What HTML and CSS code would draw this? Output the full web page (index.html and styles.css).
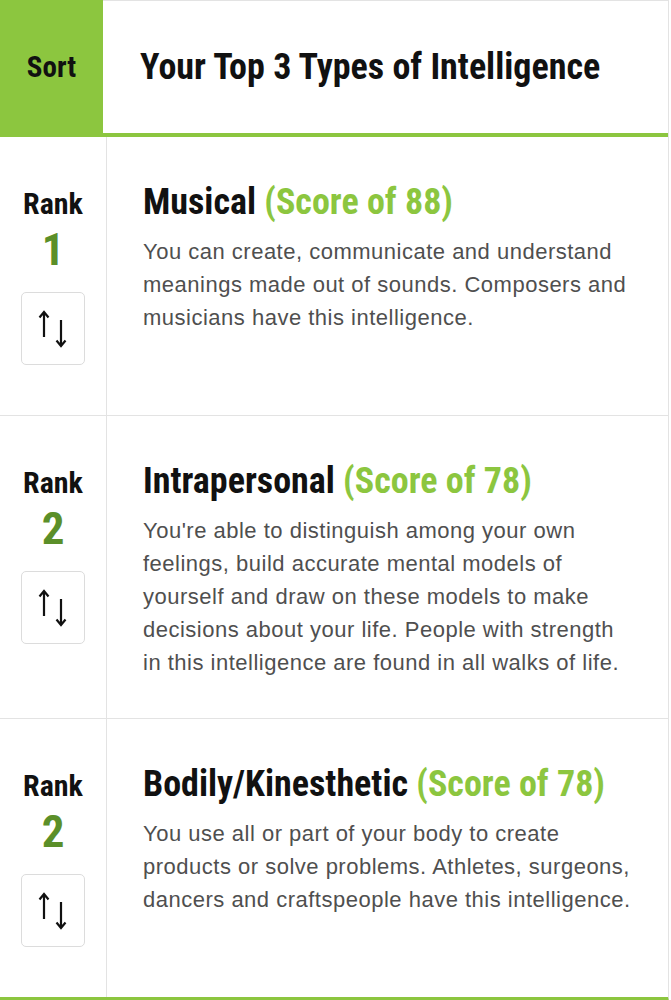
FILE: index.html
```html
<!DOCTYPE html>
<html>
<head>
<meta charset="utf-8">
<link rel="stylesheet" href="styles.css">
</head>
<body>
<div class="table">
  <div class="head">
    <div class="head-sort">Sort</div>
    <div class="head-title">Your Top 3 Types of Intelligence</div>
  </div>

  <div class="row">
    <div class="rank-col">
      <div class="rank-label">Rank</div>
      <div class="rank-num">1</div>
      <div class="sort-btn">
        <svg width="30" height="38" viewBox="0 0 30 38"><path d="M6 27V2M1.5 7.5L6 2l4.5 5.5M23 10v26M18.5 30.5L23 36l4.5-5.5" fill="none" stroke="#111" stroke-width="2.2"/></svg>
      </div>
    </div>
    <div class="info-col">
      <div class="title">Musical <span class="score">(Score of 88)</span></div>
      <p class="desc">You can create, communicate and understand meanings made out of sounds. Composers and musicians have this intelligence.</p>
    </div>
  </div>

  <div class="row">
    <div class="rank-col">
      <div class="rank-label">Rank</div>
      <div class="rank-num">2</div>
      <div class="sort-btn">
        <svg width="30" height="38" viewBox="0 0 30 38"><path d="M6 27V2M1.5 7.5L6 2l4.5 5.5M23 10v26M18.5 30.5L23 36l4.5-5.5" fill="none" stroke="#111" stroke-width="2.2"/></svg>
      </div>
    </div>
    <div class="info-col">
      <div class="title">Intrapersonal <span class="score">(Score of 78)</span></div>
      <p class="desc">You're able to distinguish among your own feelings, build accurate mental models of yourself and draw on these models to make decisions about your life. People with strength in this intelligence are found in all walks of life.</p>
    </div>
  </div>

  <div class="row last">
    <div class="rank-col">
      <div class="rank-label">Rank</div>
      <div class="rank-num">2</div>
      <div class="sort-btn">
        <svg width="30" height="38" viewBox="0 0 30 38"><path d="M6 27V2M1.5 7.5L6 2l4.5 5.5M23 10v26M18.5 30.5L23 36l4.5-5.5" fill="none" stroke="#111" stroke-width="2.2"/></svg>
      </div>
    </div>
    <div class="info-col">
      <div class="title">Bodily/Kinesthetic <span class="score">(Score of 78)</span></div>
      <p class="desc">You use all or part of your body to create products or solve problems. Athletes, surgeons, dancers and craftspeople have this intelligence.</p>
    </div>
  </div>
</div>
</body>
</html>
```

FILE: styles.css
```css
html, body {
  margin: 0;
  padding: 0;
  background: #fff;
}

.table {
  width: 668px;
  border-right: 1px solid #e3e3e3;
  border-bottom: 4px solid #8cc63f;
  font-family: Roboto, "Liberation Sans", sans-serif;
  font-stretch: condensed;
}

.head {
  display: flex;
  height: 132px;
  border-top: 1px solid #e3e3e3;
  border-bottom: 4px solid #8cc63f;
}

.head-sort {
  width: 103px;
  background: #8cc63f;
  margin-top: -1px;
  display: flex;
  align-items: center;
  justify-content: center;
  font-weight: bold;
  font-size: 29px;
  color: #111;
}

.head-title {
  flex: 1;
  display: flex;
  align-items: center;
  padding-left: 37px;
  font-weight: bold;
  font-size: 36px;
  color: #111;
}

.row {
  display: flex;
  border-bottom: 1px solid #e3e3e3;
}

.row.last {
  border-bottom: none;
}

.rank-col {
  width: 106px;
  flex: none;
  border-right: 1px solid #e3e3e3;
  display: flex;
  flex-direction: column;
  align-items: center;
  padding-top: 51px;
  padding-bottom: 50px;
}

.rank-label {
  font-weight: bold;
  font-size: 30px;
  line-height: 32px;
  color: #111;
}

.rank-num {
  margin-top: 6px;
  font-weight: bold;
  font-size: 45px;
  line-height: 48px;
  color: #5b8f29;
}

.sort-btn {
  margin-top: 18px;
  width: 62px;
  height: 71px;
  border: 1px solid #dcdcdc;
  border-radius: 5px;
  display: flex;
  align-items: center;
  justify-content: center;
}

.info-col {
  flex: 1;
  padding: 43px 33px 39px 36px;
}

.title {
  font-weight: bold;
  font-size: 36px;
  line-height: 44px;
  color: #111;
}

.score {
  color: #8cc63f;
}

.desc {
  margin: 11px 0 0;
  font-family: "Liberation Sans", Arial, sans-serif;
  font-stretch: normal;
  font-size: 22px;
  letter-spacing: 0.5px;
  line-height: 33px;
  color: #4f4f4f;
}
```
